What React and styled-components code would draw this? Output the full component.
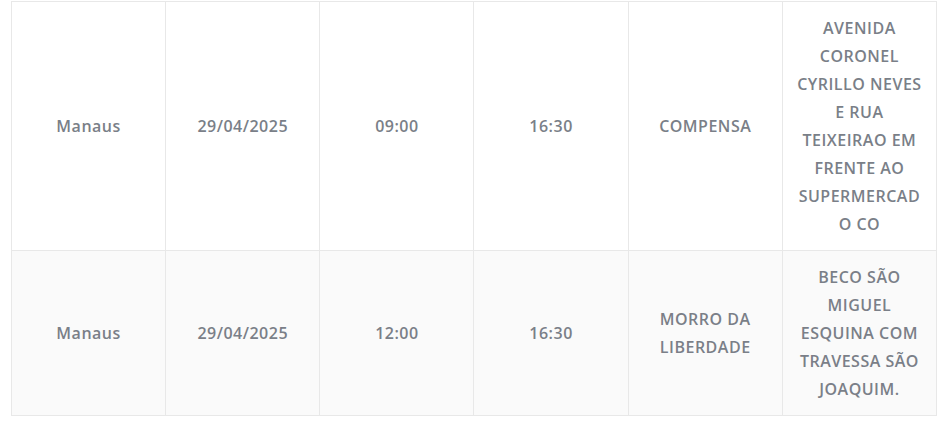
import React from "react";
import styled, { createGlobalStyle } from "styled-components";

const Global = createGlobalStyle`
  html, body { margin: 0; padding: 0; background: #fff; }
  body { font-family: "Open Sans", "Liberation Sans", sans-serif; }
`;

const Wrap = styled.div`
  padding: 1px 10px 0 11px;
`;

const Table = styled.table`
  width: 926px;
  border-collapse: collapse;
  table-layout: fixed;
`;

const Row = styled.tr`
  background: ${(p) => (p.$alt ? "#fafafa" : "#ffffff")};
`;

const Cell = styled.td`
  border: 1px solid #e8e8e8;
  padding: 12px 12px;
  text-align: center;
  vertical-align: middle;
  color: #7a7f88;
  font-family: "Open Sans", "Liberation Sans", sans-serif;
  font-size: 16px;
  font-weight: 600;
  letter-spacing: 0.5px;
  line-height: 28px;
  overflow-wrap: break-word;
  word-break: break-word;
`;

const rows = [
  ["Manaus", "29/04/2025", "09:00", "16:30", "COMPENSA", "AVENIDA CORONEL CYRILLO NEVES E RUA TEIXEIRAO EM FRENTE AO SUPERMERCADO CO"],
  ["Manaus", "29/04/2025", "12:00", "16:30", "MORRO DA LIBERDADE", "BECO SÃO MIGUEL ESQUINA COM TRAVESSA SÃO JOAQUIM."],
];

export default function App() {
  return (
    <>
      <Global />
      <Wrap>
        <Table>
          <tbody>
            {rows.map((r, i) => (
              <Row key={i} $alt={i % 2 === 1}>
                {r.map((c, j) => (
                  <Cell key={j}>{c}</Cell>
                ))}
              </Row>
            ))}
          </tbody>
        </Table>
      </Wrap>
    </>
  );
}
